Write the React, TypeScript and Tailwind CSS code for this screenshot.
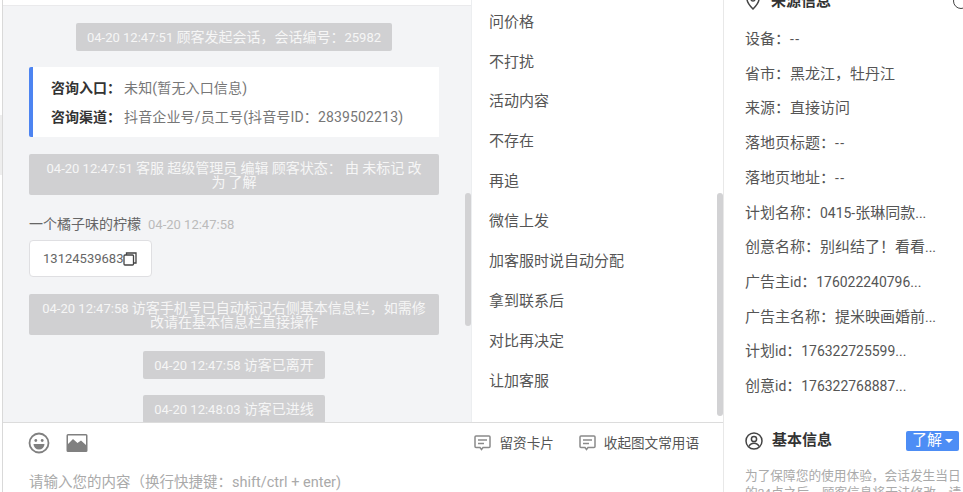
import React from 'react';

const FONT = "font-['Roboto','Noto_Sans_CJK_SC',sans-serif]";

const quickReplies = ['问价格', '不打扰', '活动内容', '不存在', '再追', '微信上发', '加客服时说自动分配', '拿到联系后', '对比再决定', '让加客服'];

// full-width punctuation, kept as escapes so it survives editing
const C = '\uFF1A';
const D = '\uFF0C';

const sourceRows = [
  `设备${C}--`,
  `省市${C}黑龙江${D}牡丹江`,
  `来源${C}直接访问`,
  `落地页标题${C}--`,
  `落地页地址${C}--`,
  `计划名称${C}0415-张琳同款...`,
  `创意名称${C}别纠结了\uFF01看看...`,
  `广告主id${C}176022240796...`,
  `广告主名称${C}提米映画婚前...`,
  `计划id${C}176322725599...`,
  `创意id${C}176322768887...`,
];

// latin runs sit a little smaller than the CJK around them
const T = ({ children }: { children: string }) => (
  <>
    {children.split(/([\x20-\x7e]+)/).map((part, i) =>
      /[\x20-\x7e]/.test(part) ? (
        <span key={i} className={`text-[0.93em] leading-none whitespace-pre-wrap ${part === '--' ? 'tracking-[1.5px]' : ''}`}>{part}</span>
      ) : part
    )}
  </>
);

const SystemNote = ({ children, wide }: { children: string; wide?: boolean }) => (
  <div className={`bg-[#d0d0d2] rounded-[2px] text-[#f6f6f6] text-center text-[14px] leading-[14px] ${wide ? 'w-[410px] px-3 py-[6.5px]' : 'h-[28px] px-[11px] flex items-center'}`}>
    <span><T>{children}</T></span>
  </div>
);

const CardIcon = () => (
  <svg width="17" height="16" viewBox="0 0 17 16" fill="none" stroke="#8a8a8a" strokeWidth="1.5">
    <path d="M2 1h13a1 1 0 0 1 1 1v9.5a1 1 0 0 1-1 1H9l-1.5 2-1.5-2H2a1 1 0 0 1-1-1V2a1 1 0 0 1 1-1z" />
    <path d="M4 5h9M4 8.5h6" />
  </svg>
);

const ChatPanel = () => (
  <div className="relative w-[468px] shrink-0 h-full overflow-hidden bg-[#f3f4f6] border-t-[5px] border-[#fff]">
    <div className="h-px bg-[#eaeaec]" />
    <div className="flex flex-col items-center pt-[17px] pl-[26px] pr-[32px]">
      <SystemNote>{`04-20 12:47:51 顾客发起会话${D}会话编号${C}25982`}</SystemNote>

      <div className="mt-4 w-[410px] h-[70px] bg-white border-l-4 border-[#4d84f1] rounded-l-[2px] pl-[18px] pt-[7px] text-[14px] leading-[29px] text-[#777] whitespace-nowrap">
        <div><span className="font-bold text-[#333] mr-[3px]">{`咨询入口${C}`}</span><span className="tracking-[0.15px]">未知(暂无入口信息)</span></div>
        <div><span className="font-bold text-[#333] mr-[3px]">{`咨询渠道${C}`}</span><span className="tracking-[0.15px]">{`抖音企业号/员工号(抖音号ID${C}2839502213)`}</span></div>
      </div>

      <div className="mt-[17px]">
        <SystemNote wide>{`04-20 12:47:51 客服 超级管理员 编辑 顾客状态${C} 由 未标记 改为 了解`}</SystemNote>
      </div>

      <div className="mt-[19px] w-[410px]">
        <div className="text-[14px] leading-5 text-[#666]">
          一个橘子味的柠檬<span className="ml-[7px] text-[#bbb]"><T>04-20 12:47:58</T></span>
        </div>
        <div className="mt-[6px] w-[123px] h-[37px] bg-white border border-[#dfdfe2] rounded-[4px] flex items-center pl-[13px] text-[14px] text-[#666]">
          <span><T>13124539683</T></span>
          <svg width="14" height="14" viewBox="0 0 14 14" fill="none" stroke="#444" strokeWidth="1.3">
            <rect x="1" y="3" width="9.500" height="10" rx="1" />
            <path d="M3.500 3V1h9.500v10h-2.500" />
          </svg>
        </div>
      </div>

      <div className="mt-[17px]">
        <SystemNote wide>{`04-20 12:47:58 访客手机号已自动标记右侧基本信息栏${D}如需修改请在基本信息栏直接操作`}</SystemNote>
      </div>
      <div className="mt-[16px]">
        <SystemNote>04-20 12:47:58 访客已离开</SystemNote>
      </div>
      <div className="mt-4">
        <SystemNote>04-20 12:48:03 访客已进线</SystemNote>
      </div>
    </div>
    <div className="absolute right-0 top-[188px] w-[6px] h-[133px] rounded-[3px] bg-[#d2d2d4]" />
  </div>
);

const QuickReplyPanel = () => (
  <div className="relative flex-1 h-full overflow-hidden bg-white border-l border-[#eceef0] pl-[17px] pt-[2px] text-[15px] text-[#555]">
    {quickReplies.map((reply) => (
      <div key={reply} className="h-[39.9px] flex items-center">{reply}</div>
    ))}
    <div className="absolute right-0 top-[193px] w-[6px] h-[223px] rounded-[3px] bg-[#d2d2d4]" />
  </div>
);

const Composer = () => (
  <div className="h-[70px] bg-white border-t border-[#dcdcdc] relative">
    <div className="flex items-center pl-[25px] pr-[24px] pt-[9px]">
      <svg width="22" height="22" viewBox="0 0 22 22" fill="none">
        <circle cx="11" cy="11" r="9.500" stroke="#808080" strokeWidth="1.8" />
        <circle cx="7.800" cy="8.500" r="1.400" fill="#808080" />
        <circle cx="14.200" cy="8.500" r="1.400" fill="#808080" />
        <path d="M5.500 12h11a5.500 5.500 0 0 1-11 0z" fill="#808080" />
      </svg>
      <svg className="ml-[16px]" width="22" height="20" viewBox="0 0 22 20">
        <path fillRule="evenodd" fill="#808080" d="M2 1h18a1.500 1.500 0 0 1 1.500 1.500v15A1.500 1.500 0 0 1 20 19H2A1.500 1.500 0 0 1 .5 17.500v-15A1.500 1.500 0 0 1 2 1zm0 1.500v8.500l5-5 4.500 4 3.500-2.500 5 4.500V2.500z" />
      </svg>
      <div className="ml-auto flex items-center gap-2 text-[13.6px] text-[#555]">
        <CardIcon />
        <span>留资卡片</span>
        <span className="ml-[17px]"><CardIcon /></span>
        <span>收起图文常用语</span>
      </div>
    </div>
    <div className="pl-[26px] mt-[18px] text-[14.5px] text-[#aaa] whitespace-nowrap">
      {`请输入您的内容\uFF08换行快捷键${C}shift/ctrl + enter)`}
    </div>
  </div>
);

const InfoPanel = () => (
  <div className="w-[240px] shrink-0 h-full overflow-hidden bg-white border-l border-[#e8e8e8] pl-[21px] text-[15px] text-[#555]">
    <div className="-mt-[9px] h-[20px] flex items-center font-bold text-[#333]">
      <svg width="16" height="18" viewBox="0 0 16 18" fill="none" stroke="#444" strokeWidth="1.5">
        <path d="M8 17C4 13 2 10 2 7a6 6 0 0 1 12 0c0 3-2 6-6 10z" />
        <circle cx="8" cy="7" r="2" />
      </svg>
      <span className="ml-[10px]">来源信息</span>
      <span className="ml-auto -mr-[6px] w-[16px] h-[16px] rounded-full border-[1.5px] border-[#444]" />
    </div>
    <div className="mt-[11px]">
      {sourceRows.map((row) => (
        <div key={row} className="h-[34.7px] flex items-center whitespace-pre"><span><T>{row}</T></span></div>
      ))}
    </div>
    <div className="mt-[27px] h-[20px] flex items-center pr-[4px]">
      <svg width="18" height="18" viewBox="0 0 18 18" fill="none" stroke="#444" strokeWidth="1.5">
        <circle cx="9" cy="9" r="8" />
        <circle cx="9" cy="7" r="2.600" />
        <path d="M4 14.500c1-2.500 3-3.300 5-3.300s4 .8 5 3.300" />
      </svg>
      <span className="ml-[9px] font-bold text-[#333]">基本信息</span>
      <span className="ml-auto flex items-center justify-center gap-[3px] w-[53px] h-[20px] rounded-[2px] bg-[#4d8df5] text-white">
        了解
        <span className="w-0 h-0 border-x-[4px] border-x-transparent border-t-[4px] border-t-white" />
      </span>
    </div>
    <div className="mt-[16px] w-[218px] text-[12.7px] leading-[17px] text-[#aaa]">
      <T>{`为了保障您的使用体验${D}会话发生当日的24点之后${D}顾客信息将无法修改${D}请`}</T>
    </div>
  </div>
);

export default function App() {
  return (
    <div className={`w-[963px] h-[492px] overflow-hidden flex bg-white ${FONT}`}>
      <div className="relative w-[3px] shrink-0 border-r border-[#d9d9d9]">
        <div className="absolute left-0 top-[115px] w-[2px] h-[60px] bg-[#eeeeee]" />
      </div>
      <div className="w-[720px] shrink-0 h-full flex flex-col">
        <div className="h-[422px] flex shrink-0">
          <ChatPanel />
          <QuickReplyPanel />
        </div>
        <Composer />
      </div>
      <InfoPanel />
    </div>
  );
}
